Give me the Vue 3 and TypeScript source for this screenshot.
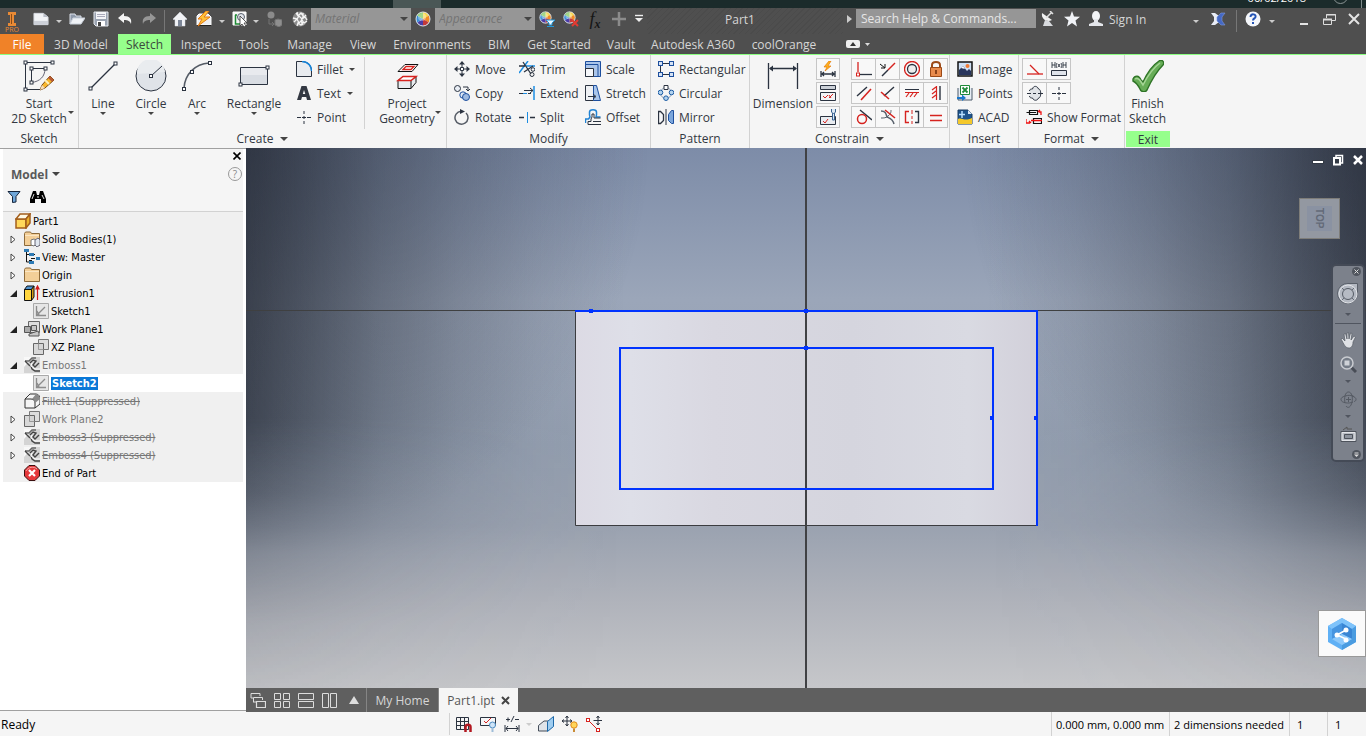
<script setup lang="ts">
import { ref } from 'vue'

interface Tool { icon: string; label: string; caret?: boolean }
interface TreeNode { icon: string; label: string; level: number; state?: 'open' | 'closed'; muted?: boolean; struck?: boolean; active?: boolean }

const K = '#2b3340'
const R = '#d6231f'
const B = '#1d4f9e'
const sq = (x: number, y: number, c = K) => `<rect x="${x - 1.5}" y="${y - 1.5}" width="3" height="3" fill="#fff" stroke="${c}"/>`

const globe = '<circle cx="8" cy="8" r="7" fill="#eee"/><path d="M8 8V1A7 7 0 0 1 14 4.500Z" fill="#f7d64a"/><path d="M8 8L14 4.500A7 7 0 0 1 14 11.500Z" fill="#f08a24"/><path d="M8 8L14 11.500A7 7 0 0 1 8 15Z" fill="#c33a3a"/><path d="M8 8V15A7 7 0 0 1 2 11.500Z" fill="#4a3ca8"/><path d="M8 8L2 11.500A7 7 0 0 1 2 4.500Z" fill="#3b8fd8"/><path d="M8 8L2 4.500A7 7 0 0 1 8 1Z" fill="#6fc04a"/><circle cx="7" cy="6" r="4" fill="#fff" opacity=".35"/><circle cx="8" cy="8" r="7" fill="none" stroke="#d8dde8"/>'
const globeSmall = `<svg x="0" y="0" width="13" height="13" viewBox="0 0 16 16">${globe}</svg>`
const sketchPage = '<path d="M.5.5h15v15H.5z" fill="#e6e6e6" stroke="#a9a9a9"/><path d="M3.500 3v9.500H13M4 12l8-8M4 8l2 4" fill="none" stroke="#8c8c8c" stroke-width="1.300"/>'
const planes = '<path d="M5.500.5h10v10h-10z" fill="#ddd" stroke="#777"/><path d="M.5 4.500h10v11H.5z" fill="#d2d2d2" fill-opacity=".8" stroke="#666"/><path d="M5.500 4.500v6h5" fill="none" stroke="#999"/>'
const emboss = '<path d="M0 0h16v16H0z" fill="#d4d4d4"/><path d="M0 0h9L0 10z" fill="#f8f8f8"/><path d="M1 4h4l3-3h4" fill="none" stroke="#666" stroke-width="1.500"/><path d="M6 6l3-3 3 1-3 4 2 2 4-4M7 9l1 3 3 2h5M1 4l5 5" fill="none" stroke="#444" stroke-width="1.400"/><path d="M8 6l-1 3 4 3h5" stroke="#fff" fill="none"/>'
const folder = '<path d="M.5 2.500l1-1.500h5l1 1.500h8v12H.5z" fill="#f3cf98" stroke="#8d6a3a"/><path d="M1 4.500h14" stroke="#fbe6c4"/>'

const icons: Record<string, string> = {
  newFile: '<path d="M1 2h10l5 4v8H1z" fill="#f1f3f6" stroke="#d4d8de"/><path d="M11 2v4h5" fill="#b9bec8"/><path d="M1 10h15v4H1z" fill="#ccd0d8"/>',
  open: '<path d="M1 13V3h5l1 2h5v3" fill="#8e99aa" stroke="#dde2ea"/><path d="M1 13L4 7h12l-4 6z" fill="#eef1f5" stroke="#c9d0da"/>',
  save: '<path d="M1 1h14v14H3l-2-2z" fill="#9aa3b1" stroke="#e5e8ed"/><path d="M3 1h10v7H3z" fill="#f4f5f8"/><path d="M4 3.500h8M4 5.500h8" stroke="#aab"/><path d="M4 10h8v5H4z" fill="#fff"/><path d="M5 11h3v4H5z" fill="#444"/>',
  undo: '<path d="M1 7l6-5v3c6 0 8 3 7 8-1-3-3-4-7-4v3z" fill="#f5f5f5"/>',
  redo: '<path d="M15 7L9 2v3C3 5 1 8 2 13c1-3 3-4 7-4v3z" fill="#969696"/>',
  home: '<path d="M1 8l7-7 7 7-1 1-1-1v7H3V8L2 9z" fill="#f2f3f6" stroke="#d8dce4" stroke-width=".5"/><path d="M6 9h4v6H6z" fill="#7d8798"/>',
  bolt: '<path d="M1 5l2-2h9l3 3v8H1z" fill="#eceef2" stroke="#fff"/><path d="M1 14h14v1H1z" fill="#222"/><path d="M10 0L2 8h4l-4 7L14 6H8l5-6z" fill="#ffc23a" stroke="#e47a12"/>',
  pick: '<path d="M1 1h13v13H1z" fill="#f4f4f4" stroke="#fff"/><path d="M3.500 4v9H9M3 4h2" stroke="#1f8a35" stroke-width="1.500" fill="none"/><circle cx="9" cy="6" r="3.500" fill="#dfe3ea" stroke="#59616e"/><path d="M8 5v10l2-2 2 3 2-1-2-3h3z" fill="#fff" stroke="#333" stroke-width=".8"/>',
  physical: '<circle cx="5" cy="4" r="3.500" fill="#8b8b8b"/><path d="M3 8v5h5M6 11l2 2-2 2" stroke="#747474" fill="none"/><path d="M9 9l3-1 4 1v5l-3 2-4-2z" fill="#8f8f8f" stroke="#757575"/>',
  sphere: '<circle cx="8" cy="8" r="7.500" fill="#8c8c8c"/><path d="M4 2l2 3 3-3 3 4 2-2M1 7l4 1 2-3 3 3 3-2 2 3M2 11l3-3 2 4 3-3 2 3 3-2M5 15l1-3 3 2 2-3M5 1l1 4M11 2v4l-2 4 2 4" fill="none" stroke="#f4f4f4" stroke-width="1.300"/>',
  globe,
  globeFilter: `${globeSmall}<path d="M7 9h9l-3 3v2h-3v-2z" fill="#e9f7ff" stroke="#2497d8"/><path d="M8 15.500h7" stroke="#2497d8"/>`,
  globeDelete: `${globeSmall}<path d="M9 9l6 6M15 9l-6 6" stroke="#e33b32" stroke-width="2"/>`,
  plus: '<path d="M8 1v14M1 8h14" stroke="#8b8b8b" stroke-width="2.500"/>',
  more: '<path d="M4 4.500h8" stroke="#eee" stroke-width="1.400"/><path d="M4 7h8l-4 4z" fill="#eee"/>',
  dish: '<path d="M2 2c-1 6 5 10 10 7z" fill="#f2f2f2"/><path d="M6 7l6-6M10 0l3 3" stroke="#e2e2e2" stroke-width="1.500"/><path d="M5 9l-2 6h10l-4-5z" fill="#d8dade"/>',
  star: '<path d="M8 0l2 5.500 6 .3-4.500 3.800L13 15.500 8 12l-5 3.500 1.500-5.900L0 5.800l6-.3z" fill="#f1f3f7"/>',
  person: '<ellipse cx="8" cy="5" rx="4" ry="5" fill="#f3f4f7"/><path d="M6 8h4v3l5 2v2H1v-2l5-2z" fill="#e4e6eb"/>',
  exchange: '<path d="M1 2h4l4 3v6l-4 3H1l3-4V6z" fill="#e9edf7"/><path d="M15 2h-4L7 6v4l4 4h4l-3-4V6z" fill="#4468c4" stroke="#7e97dc" stroke-width=".6"/>',
  help: '<circle cx="8" cy="8" r="7.500" fill="#f5f7fb"/><path d="M5.500 6c0-4 6-3 5 0-.5 1.500-2.500 1.500-2.500 3.500" fill="none" stroke="#2454b5" stroke-width="2"/><path d="M7 11h2v2H7z" fill="#2454b5"/>',
  min: '<path d="M4 13h8" stroke="#e4e4e4" stroke-width="2"/>',
  restore: '<path d="M5.500 7V3.500h9v6H11" fill="none" stroke="#ddd"/><path d="M5 4h10" stroke="#ddd"/><path d="M2.500 8.500h8v5h-8z" fill="none" stroke="#ddd"/><path d="M2 8.500h9" stroke="#ddd" stroke-width="2"/>',
  close: '<path d="M3 3l10 10M13 3L3 13" stroke="#e4e4e4" stroke-width="2"/>',

  startSketch: `<path d="M2.500 29.500v-27h27M2.500 29.500H17M8.500 22V8.500H22" fill="none" stroke="${K}"/><path d="M22 8.500c0 8-5 13-13.500 14" fill="none" stroke="#667"/>${sq(2.5, 2.5)}${sq(29.5, 2.5)}${sq(2.5, 29.5)}${sq(8.5, 8.5)}${sq(22.5, 8.5)}${sq(8.5, 22.5)}<path d="M27 16l4 4-9 8-5 2 2-5z" fill="#f8b62c" stroke="#7a4b13"/><path d="M27 16l4 4-2 2-4-4z" fill="#b75a35"/><path d="M22 20l4 4" stroke="#fff1b8" stroke-width="2"/><path d="M17 30l2-5 3 3z" fill="#f5ddba"/>`,
  line: `<path d="M4 28L28 4" stroke="${K}" stroke-width="1.300"/>${sq(3.5, 28.5)}${sq(28.5, 3.5)}`,
  circle: `<circle cx="16" cy="16" r="15" fill="#dfe3e8" stroke="${K}"/><path d="M2 14a14 14 0 0 1 28-2z" fill="#e9ecef"/><path d="M16 16L27 6" stroke="${K}"/>${sq(16, 16)}`,
  arc: `<path d="M3 28C4 14 14 4 28 3" fill="none" stroke="#555c66" stroke-width="1.500"/>${sq(3, 29)}${sq(11, 12)}${sq(29, 3)}`,
  rectangle: `<path d="M2.500 7.500h27v17h-27z" fill="#d9dde3" stroke="${K}"/><path d="M3 8h26v7H3z" fill="#e8eaee"/>${sq(2.5, 24.5)}${sq(29.5, 7.5)}`,
  fillet: `<path d="M.5 15.500V.5H6C12 .5 15.500 5 15.500 10v5.500z" fill="#e8ebef" stroke="${K}"/><path d="M6 .5c6 0 9.500 4.500 9.500 9.500" fill="none" stroke="#1583d8" stroke-width="1.500"/>`,
  text: '<path d="M5.500 1h5L15 15h-4l-.8-3H6l-.9 3H1zM8 5l-1.200 4h2.500z" fill="#333842" fill-rule="evenodd"/>',
  point: `<path d="M8 2v3M8 7v3M8 12v3M1 8.500h4M6 8.500h4M11 8.500h4" stroke="${K}"/>`,
  project: `<path d="M7 11.500l7-7h13l-6 7z" fill="#fff" stroke="#111"/><path d="M12 9.500l3-3h8l-3 3z" fill="none" stroke="${R}" stroke-width="1.300"/><path d="M7 20.500l5-4h13v6l-5 6H7z" fill="#e8ebef" stroke="#111"/><path d="M7 20.500h13l5-4M20 20.500v8" fill="none" stroke="#111"/><path d="M7 20.500l5-4h13l-5 4z" fill="#fff" stroke="${R}" stroke-width="1.500"/>`,
  move: `<path d="M8 0l3 3.500H5zM8 16l3-3.500H5zM0 8l3.500-3v6zM16 8l-3.500-3v6z" fill="${K}"/><path d="M8 3v3M8 10v3M3 8h3M10 8h3" stroke="${K}"/><path d="M6.500 6.500h3v3h-3z" fill="#fff" stroke="${K}"/>`,
  copy: `<circle cx="3.500" cy="3.500" r="3" fill="#e9eef5" stroke="${K}"/><path d="M9 2h5v4M12 4l2 2 2-2" fill="none" stroke="${K}"/><circle cx="9" cy="10" r="3.200" fill="#dbe6f5" stroke="${B}"/><circle cx="12" cy="12" r="3.500" fill="#9db9e0" stroke="${B}"/>`,
  rotate: `<path d="M7 2.200A6.500 6.500 0 1 0 12 4" fill="none" stroke="#565c66" stroke-width="1.500"/><path d="M6 0l5 2.500L6 5z" fill="${K}"/>`,
  trim: `<path d="M7 5h9M0 12L9 0" stroke="#1b8de2" stroke-width="1.500"/><path d="M0 5h6M4 1l8 12M14 5L5 11" stroke="${K}" stroke-width="1.300"/><circle cx="13" cy="13.500" r="2" fill="none" stroke="${K}"/><circle cx="14" cy="8.500" r="1.800" fill="none" stroke="${K}"/>`,
  extend: `<path d="M0 8.500h8" stroke="#1b8de2"/><path d="M5 5.500h9M11 3l3 2.500L11 8M0 8.500h4M9 8.500h3" stroke="${K}" fill="none"/><path d="M15 1v14" stroke="#1b8de2" stroke-width="1.500"/>`,
  split: `<path d="M0 8.500h5M11 8.500h5" stroke="${K}" stroke-width="1.300"/><path d="M8.500 3v11" stroke="#1b8de2"/>`,
  scale: `<path d="M.5.5h15v15H.5z" fill="#aac5ea" stroke="${B}"/><path d="M1 3.500h12v12" fill="none" stroke="${B}"/><path d="M.5 7.500h8v8h-8z" fill="#f5f7fa" stroke="${K}"/>`,
  stretch: `<path d="M.5.5h8v15h-8z" fill="#eef0f3" stroke="${K}"/><path d="M8.500.5h3l4 15h-7z" fill="#a9c6ec" stroke="${B}"/><path d="M3 11.500h7M8 9l3 2.500L8 14" fill="none" stroke="${K}"/>`,
  offset: `<path d="M.5 14v-4h3L5 8 4.500 6V3c0-3 7-3 7 0v3L11 8l1.500 0h3" fill="none" stroke="#2183d4" stroke-width="1.500"/><path d="M3 15.500v-3h3V10L7 8V5h2v4h6.500M3 15.500h13M8 12.500h8" fill="none" stroke="${K}"/>`,
  rectangular: `<path d="M4 2.500h8M2.500 4v8M4 13.500h8" stroke="${K}"/>${[[2.5, 2.5], [13.5, 2.5], [2.5, 13.5], [13.5, 13.5]].map(p => `<rect x="${p[0] - 2}" y="${p[1] - 2}" width="4" height="4" fill="#d6e3f5" stroke="${B}"/>`).join('')}`,
  circular: `<circle cx="8" cy="8" r="5.500" fill="none" stroke="#8fa1b8"/>${[[13.5, 7.5], [2.5, 7.5], [8, 13.2]].map(p => `<circle cx="${p[0]}" cy="${p[1]}" r="2.300" fill="#b4d4ef" stroke="#1d5da5"/>`).join('')}<path d="M6 .5h4v4H6z" fill="#fff" stroke="${K}"/>`,
  mirror: `<path d="M8 0v16" stroke="${K}"/><path d="M.5 2.500h2l3 3v6l-3 3h-2z" fill="#f5f6f8" stroke="${K}" stroke-width="1.300"/><path d="M15.500 1.500h-2l-3 4v6l3 3h2z" fill="#7ba6dc" stroke="${B}"/>`,
  dimension: `<path d="M1.500 3v26M30.500 3v26M3 8.500h26" stroke="${K}" stroke-width="1.300"/><path d="M2 8.500l4-3v6zM30 8.500l-4-3v6z" fill="${K}"/>`,
  autoDim: `<path d="M9 0L4 6h3l-2 4 6-5H8l3-5z" fill="#ffb21e" stroke="#e57d0a" stroke-width=".7"/><path d="M1 10v6M15 10v6M2 13h12M4 11l-2 2 2 2M12 11l2 2-2 2" stroke="${K}" fill="none" stroke-width="1.300"/>`,
  showConstr: `<path d="M.5.5h15v4H.5z" fill="#ccd1d8" stroke="${K}"/><path d="M.5 7.500h15v8H.5z" fill="#f2f4f6" stroke="${K}"/><path d="M3 11l2 2 3-3M9 13l4-4M9 10l2 3" stroke="${R}" fill="none"/>`,
  constrSet: `<path d="M.5 7.500h15v8H.5z" fill="#e9ecf0" stroke="${K}"/><path d="M3 12l2 2 3-4" stroke="${R}" fill="none"/><path d="M12.500 4v7h2V4" stroke="#35608f" fill="#dbe7f4"/><path d="M11.500 0v3l2 2 2-2V0" fill="#dbe7f4" stroke="#35608f"/>`,
  coincident: `<path d="M2 1v10" stroke="${R}" stroke-width="1.300"/><path d="M4 13.500h12" stroke="${K}" stroke-width="1.300"/><rect x=".5" y="12" width="3" height="3" fill="#fff" stroke="${R}"/>`,
  collinear: `<path d="M0 3l5 4M5 3v4H1" stroke="#111" fill="none"/><path d="M2 15l6-6" stroke="${K}" stroke-width="1.400"/><path d="M8 9l7-7" stroke="${R}" stroke-width="1.400"/>`,
  concentric: `<circle cx="8" cy="8" r="7.500" fill="none" stroke="${R}" stroke-width="1.300"/><circle cx="8" cy="8" r="4.500" fill="#eee" stroke="${K}" stroke-width="1.300"/>`,
  lock: '<path d="M4 7V4c0-4 8-4 8 0v3" fill="none" stroke="#9b4a18" stroke-width="2"/><path d="M2.500 6.500h11v9h-11z" fill="#e88b4d" stroke="#9b4a18"/><path d="M8 9v4" stroke="#6b2a08" stroke-width="1.500"/>',
  parallel: `<path d="M1 11l10-9" stroke="${K}" stroke-width="1.400"/><path d="M5 15L15 4" stroke="${R}" stroke-width="1.600"/>`,
  perpendicular: `<path d="M4 11l10-9" stroke="${K}" stroke-width="1.400"/><path d="M1 7l8 7" stroke="${R}" stroke-width="1.600"/>`,
  horizontal: `<path d="M1 4.500h14" stroke="${K}"/><path d="M1 7.500h14M5 8l-3 4M9 8l-3 4M13 8l-3 4" stroke="${R}" stroke-width="1.200"/>`,
  vertical: `<path d="M12 1v14" stroke="${K}" stroke-width="1.400"/><path d="M8.500 1v14M8 2L4 5M8 6L4 9M8 10l-4 3" stroke="${R}" stroke-width="1.200"/>`,
  tangent: `<path d="M4 1l12 10" stroke="${K}" stroke-width="1.400"/><circle cx="6" cy="10" r="4.500" fill="none" stroke="${R}" stroke-width="1.500"/>`,
  smooth: `<path d="M1 2c5 0 5 3 6 6 2 1 6 2 7 7" fill="none" stroke="#59616c" stroke-width="1.500"/><path d="M1 9c3 0 5 0 7-2 3-2 3-4 3-6" fill="none" stroke="#59616c"/><path d="M5 1l10 8" stroke="${R}" stroke-width="1.600"/>`,
  symmetric: `<path d="M5 2.500H1.500v11H5" fill="none" stroke="${R}" stroke-width="1.400"/><path d="M11 2.500h3.500v11H11" fill="none" stroke="${K}" stroke-width="1.400"/><path d="M8 1v4M8 7v3M8 12v3" stroke="${R}"/>`,
  equal: `<path d="M2 6.500h12M2 11.500h12" stroke="${R}" stroke-width="1.300"/>`,
  image: '<path d="M1 1h14v14H1z" fill="#cfe0f5" stroke="#111" stroke-width="1.500"/><circle cx="10.500" cy="5" r="2" fill="#f07b35"/><path d="M2 14V9l4-4 4 5 2-2 2 2v4z" fill="#28355c"/><path d="M4 7l2-2 2 3z" fill="#fff"/>',
  points: '<path d="M1 3v12h14V3" fill="#e7edf5" stroke="#4d5a6a"/><path d="M3.500.5h9v9h-9z" fill="#fff" stroke="#1f8a3a"/><path d="M5.500 2.500l5 5M10.500 2.500l-5 5" stroke="#1f8a3a" stroke-width="1.800"/><path d="M0 12h5V9.500l4 3.500-4 3v-2H0z" fill="#1b78cc"/>',
  acad: '<path d="M1 1h10l4 4v10H1z" fill="#1e548c" stroke="#163b63"/><path d="M1 10c4-2 6 3 14-1v6H1z" fill="#f4c82b"/><path d="M11 1v4h4z" fill="#dceaf8"/><path d="M5 2v7M2 5.500h6" stroke="#b9e0ff" stroke-width="1.500"/>',
  construction: `<path d="M0 13h16" stroke="${R}" stroke-width="1.300"/><path d="M3 4l9 9" stroke="${R}" stroke-width="1.300"/>`,
  driven: `<path d="M1 1v6M4 1v6M1 4h3M12 1v6M15 1v6M12 4h3M6 2c-1 2-1 3 0 5M10 2c1 2 1 3 0 5M7 3l2 3M9 3L7 6" stroke="${K}" fill="none" stroke-width=".9"/><path d="M.5 9.500h15v5H.5z" fill="#dfe3ea" stroke="${K}"/>`,
  centerline: `<path d="M2.500 6c0-2 2-2 3-2 1-4 5-3 6 0 3 0 3 9 0 9-1 3-5 3-6 0-1 0-3 0-3-2" fill="#e1e4e8" stroke="${K}"/><path d="M0 8.500h4M6 8.500h3M11 8.500h5" stroke="${K}"/>`,
  showFormat: `<path d="M3.500 1.500h8v4h-8zM.5 3.500H10M7.500 9.500h8v5h-8z" fill="none" stroke="#111" stroke-width="1.200"/><path d="M13 3h2v3M14 1l-2 2M0 10v4h4M3 12l2 2M5 11.500h11" stroke="#e11" fill="none" stroke-width="1.300"/>`,
  check: '<path d="M1 19c2-4 6-4 8 1l2 2C15 13 21 5 27 1c3-2 6 1 4 4-6 6-11 14-16 25-2 3-6 2-7-1C6 25 3 22 1 21z" fill="#67ad57" stroke="#2f7427" stroke-width="1.400"/><path d="M3 19c3-2 5 1 8 6C16 15 21 8 28 3" fill="none" stroke="#a6d596" stroke-width="1.500"/>',

  part: '<path d="M1 6h10v9H1z" fill="#ffd85c" stroke="#a35e1c" stroke-width="1.500"/><path d="M1 6l4-5h10l-4 5z" fill="#fff8e2" stroke="#a35e1c" stroke-width="1.500"/><path d="M11 6l4-5v9l-4 5z" fill="#e9b02a" stroke="#a35e1c" stroke-width="1.500"/>',
  bodies: `${folder}<path d="M7 9l3-1 2 1v4l-2 2-3-1z" fill="#fff" stroke="#777"/><path d="M11 9l3-2 2 2v5l-3 2-2-2z" fill="#dfe6ef" stroke="#667"/>`,
  view: '<path d="M2.500 2v11h3M2.500 5.500h3M10 5.500h1M8 11.500H5" fill="none" stroke="#111"/><path d="M0 0h5v3H0zM5 4h5v3H5zM5 12h5v3H5zM12 8h4v3h-4z" fill="#2e7bb5"/><path d="M7 9.500h4" stroke="#111"/>',
  folder,
  extrusion: '<path d="M.5 4.500h7v11h-7z" fill="#ffd53f" stroke="#111"/><path d="M.5 4.500L3 1h7l-2.500 3.500z" fill="#4f92cf" stroke="#111"/><path d="M7.500 4.500L10 1v11l-2.500 3.500z" fill="#d49c18" stroke="#111"/><path d="M13.500 15V2M12 4l1.500-3L15 4z" stroke="#d31919" stroke-width="1.200" fill="#d31919"/>',
  sketchPage,
  workPlane: '<path d="M4.500.5h11v11h-11z" fill="#ddd" stroke="#666"/><path d="M.5 5.500h6v6h-6z" fill="#aaa" stroke="#555"/><path d="M5 13l9-3 1 2v3H5zM7.500 4.500h5v5h-5z" fill="#c6c6c6" stroke="#555"/>',
  planes,
  emboss,
  filletNode: '<path d="M1 6l5-5h6c3 0 4 3 4 5v5l-5 4H1z" fill="#f5f5f5" stroke="#333"/><path d="M1 6h6c3 0 4 2 4 4v5" fill="none" stroke="#333"/><path d="M8 6l4-5c3 0 4 3 4 5l-5 4c0-2-1-4-3-4z" fill="#8a8a8a"/>',
  end: '<path d="M5 .5h6L15.500 5v6L11 15.500H5L.5 11V5z" fill="#e5383b" stroke="#3b1010"/><path d="M2 6c2-4 8-5 11-2" stroke="#f6a5a5" fill="none"/><path d="M5 5l6 6M11 5l-6 6" stroke="#fff" stroke-width="2.200"/>',

  cascade: '<path d="M1 6V1.500h9V4M1 6h2M3.500 10V5.500h9V8M3 10h3" fill="none" stroke="#ddd"/><path d="M6.500 9.500h9v6h-9zM6 9.500h10" fill="none" stroke="#ddd" stroke-width="1.200"/>',
  tiles: '<path d="M.5 1.500h6v6h-6zM9.500 1.500h6v6h-6zM.5 9.500h6v6h-6zM9.500 9.500h6v6h-6z" fill="none" stroke="#ddd"/>',
  rows: '<path d="M.5 1.500h15v6H.5zM.5 9.500h15v6H.5z" fill="none" stroke="#ddd"/>',
  cols: '<path d="M.5 1.500h6v14h-6zM8.500 1.500h6v14h-6z" fill="none" stroke="#ddd"/>',
  up: '<path d="M8 4l5 8H3z" fill="#ddd"/>',
  snap: `<path d="M.5 1.500h12v12H.5zM.5 5.500h12M.5 9.500h12M4.500 1v12M8.500 1v12" fill="none" stroke="${K}"/><path d="M9.500 16v-5c0-3 5-3 5 0v5" fill="none" stroke="#b21820" stroke-width="2.500"/>`,
  hint: `<path d="M.5 1.500h15v8H.5z" fill="#f5f6f8" stroke="${K}"/><path d="M4 5l2 2 5-5" stroke="${R}" fill="none"/><circle cx="12.500" cy="9" r="3" fill="#cfe4f7" stroke="#4d8cc2"/><path d="M11.500 12h2v4h-2z" fill="#9ebdd8"/>`,
  dimEdit: `<path d="M1 9v7M15 9v7M2 12.500h12M4 10l-2 2.500L4 15M12 10l2 2.500-2 2.500M2 3.500h4M4 1.500v4M7 6l3-6M11 3.500h4" stroke="${K}" fill="none"/>`,
  slice: '<path d="M.5 9.500L6 5h8v6l-5 4H.5z" fill="#dfe3e8" stroke="#444d59"/><path d="M9.500 5.500l6-5v10l-6 5z" fill="#9fcdf0" stroke="#1d68a8"/>',
  moveLight: `<path d="M5 0v10M0 5h10M3.500 2L5 0l1.500 2M3.500 8L5 10l1.500-2M2 3.500L0 5l2 1.500M8 3.500L10 5 8 6.500" stroke="${K}" fill="none"/><circle cx="12" cy="9" r="3.200" fill="#ffd55a" stroke="#e08a1a"/><path d="M11 12.500h2V16h-2z" fill="#c98c37"/>`,
  relax: `<path d="M2 4l10 10" stroke="${R}"/>${sq(2, 4, R)}${sq(12, 14, R)}<path d="M12 0v9M7.500 4.500h9M10.500 2L12 0l1.500 2M10.500 7L12 9l1.500-2" stroke="${K}" fill="none"/>`,
}

const ribbonTabs = ['File', '3D Model', 'Sketch', 'Inspect', 'Tools', 'Manage', 'View', 'Environments', 'BIM', 'Get Started', 'Vault', 'Autodesk A360', 'coolOrange']
const createBig: Tool[] = [
  { icon: 'line', label: 'Line' },
  { icon: 'circle', label: 'Circle' },
  { icon: 'arc', label: 'Arc' },
  { icon: 'rectangle', label: 'Rectangle' },
]
const createSmall: Tool[] = [
  { icon: 'fillet', label: 'Fillet', caret: true },
  { icon: 'text', label: 'Text', caret: true },
  { icon: 'point', label: 'Point' },
]
const modify: Tool[] = [
  { icon: 'move', label: 'Move' }, { icon: 'trim', label: 'Trim' }, { icon: 'scale', label: 'Scale' },
  { icon: 'copy', label: 'Copy' }, { icon: 'extend', label: 'Extend' }, { icon: 'stretch', label: 'Stretch' },
  { icon: 'rotate', label: 'Rotate' }, { icon: 'split', label: 'Split' }, { icon: 'offset', label: 'Offset' },
]
const pattern: Tool[] = [
  { icon: 'rectangular', label: 'Rectangular' },
  { icon: 'circular', label: 'Circular' },
  { icon: 'mirror', label: 'Mirror' },
]
const insert: Tool[] = [
  { icon: 'image', label: 'Image' },
  { icon: 'points', label: 'Points' },
  { icon: 'acad', label: 'ACAD' },
]
const constrainSide = ['autoDim', 'showConstr', 'constrSet']
const constraints = ['coincident', 'collinear', 'concentric', 'lock', 'parallel', 'perpendicular', 'horizontal', 'vertical', 'tangent', 'smooth', 'symmetric', 'equal']
const formats = ['construction', 'driven', 'centerline', 'point']

const tree: TreeNode[] = [
  { icon: 'part', label: 'Part1', level: 0 },
  { icon: 'bodies', label: 'Solid Bodies(1)', level: 1, state: 'closed' },
  { icon: 'view', label: 'View: Master', level: 1, state: 'closed' },
  { icon: 'folder', label: 'Origin', level: 1, state: 'closed' },
  { icon: 'extrusion', label: 'Extrusion1', level: 1, state: 'open' },
  { icon: 'sketchPage', label: 'Sketch1', level: 2 },
  { icon: 'workPlane', label: 'Work Plane1', level: 1, state: 'open' },
  { icon: 'planes', label: 'XZ Plane', level: 2 },
  { icon: 'emboss', label: 'Emboss1', level: 1, state: 'open', muted: true },
  { icon: 'sketchPage', label: 'Sketch2', level: 2, active: true },
  { icon: 'filletNode', label: 'Fillet1 (Suppressed)', level: 1, struck: true },
  { icon: 'planes', label: 'Work Plane2', level: 1, state: 'closed', muted: true },
  { icon: 'emboss', label: 'Emboss3 (Suppressed)', level: 1, state: 'closed', struck: true },
  { icon: 'emboss', label: 'Emboss4 (Suppressed)', level: 1, state: 'closed', struck: true },
  { icon: 'end', label: 'End of Part', level: 1 },
]
const layouts = ['cascade', 'tiles', 'rows', 'cols', 'up']
const activeTab = ref('Sketch')
const search = ref('')
</script>

<template>
  <div class="app">
    <div class="desktop">
      <span class="lit"></span>
      <span class="date">06/02/2018</span>
      <span class="ring"></span>
      <span class="edge"></span>
    </div>

    <header class="titlebar">
      <button class="logo" aria-label="Application menu">
        <svg width="12" height="14" viewBox="0 0 12 14"><path d="M2 0h8v3H8v8h2v3H2v-3h2V3H2z" fill="#e98a35" /><path d="M5 2h1v10H5z" fill="#8d4b14" /></svg>
        <span>PRO</span>
      </button>
      <button aria-label="New"><svg width="16" height="16" viewBox="0 0 17 16" v-html="icons.newFile" /></button>
      <i class="caret light"></i>
      <button aria-label="Open"><svg width="16" height="16" viewBox="0 0 16 16" v-html="icons.open" /></button>
      <button aria-label="Save"><svg width="16" height="16" viewBox="0 0 16 16" v-html="icons.save" /></button>
      <button aria-label="Undo"><svg width="16" height="16" viewBox="0 0 16 16" v-html="icons.undo" /></button>
      <button aria-label="Redo"><svg width="16" height="16" viewBox="0 0 16 16" v-html="icons.redo" /></button>
      <i class="bar"></i>
      <button aria-label="Home"><svg width="16" height="16" viewBox="0 0 16 16" v-html="icons.home" /></button>
      <button aria-label="Update"><svg width="16" height="16" viewBox="0 0 16 16" v-html="icons.bolt" /></button>
      <i class="caret light"></i>
      <button aria-label="Select"><svg width="16" height="16" viewBox="0 0 16 16" v-html="icons.pick" /></button>
      <i class="caret light"></i>
      <button aria-label="Physical"><svg width="16" height="16" viewBox="0 0 16 16" v-html="icons.physical" /></button>
      <button aria-label="Materials"><svg width="16" height="16" viewBox="0 0 16 16" v-html="icons.sphere" /></button>
      <label class="combo"><select aria-label="Material"><option>Material</option></select><i class="caret wide"></i></label>
      <button aria-label="Appearances"><svg width="16" height="16" viewBox="0 0 16 16" v-html="icons.globe" /></button>
      <label class="combo"><select aria-label="Appearance"><option>Appearance</option></select><i class="caret wide"></i></label>
      <button aria-label="Adjust"><svg width="16" height="16" viewBox="0 0 16 16" v-html="icons.globeFilter" /></button>
      <button aria-label="Clear"><svg width="16" height="16" viewBox="0 0 16 16" v-html="icons.globeDelete" /></button>
      <button class="fx" aria-label="Parameters">f<sub>x</sub></button>
      <button aria-label="Add"><svg width="16" height="16" viewBox="0 0 16 16" v-html="icons.plus" /></button>
      <button aria-label="Customize"><svg width="16" height="16" viewBox="0 0 16 16" v-html="icons.more" /></button>
      <span class="doc">Part1</span>
      <i class="play"></i>
      <input v-model="search" class="search" type="text" placeholder="Search Help &amp; Commands..." aria-label="Search Help">
      <button aria-label="Communication"><svg width="16" height="16" viewBox="0 0 16 16" v-html="icons.dish" /></button>
      <button aria-label="Favorites"><svg width="16" height="16" viewBox="0 0 16 16" v-html="icons.star" /></button>
      <button aria-label="Account"><svg width="16" height="16" viewBox="0 0 16 16" v-html="icons.person" /></button>
      <button class="signin">Sign In</button>
      <i class="caret light"></i>
      <button aria-label="Exchange"><svg width="16" height="16" viewBox="0 0 16 16" v-html="icons.exchange" /></button>
      <i class="bar"></i>
      <button aria-label="Help"><svg width="16" height="16" viewBox="0 0 16 16" v-html="icons.help" /></button>
      <i class="caret light"></i>
      <span></span>
      <button aria-label="Minimize"><svg width="16" height="16" viewBox="0 0 16 16" v-html="icons.min" /></button>
      <button aria-label="Restore"><svg width="16" height="16" viewBox="0 0 16 16" v-html="icons.restore" /></button>
      <button aria-label="Close"><svg width="16" height="16" viewBox="0 0 16 16" v-html="icons.close" /></button>
    </header>

    <nav class="tabs">
      <button v-for="t in ribbonTabs" :key="t" :class="{ file: t === 'File', on: t === activeTab }" @click="activeTab = t">{{ t }}</button>
      <button class="pill" aria-label="Minimize ribbon">
        <svg width="24" height="8" viewBox="0 0 24 8"><rect width="14" height="8" rx="2" fill="#eee" /><path d="M7 2l3 4H4z" fill="#333" /><path d="M19 3h5l-2.500 3z" fill="#ddd" /></svg>
      </button>
    </nav>

    <section class="ribbon">
      <div class="group g-sketch">
        <div class="body">
          <button class="big"><svg width="32" height="32" viewBox="0 0 32 32" v-html="icons.startSketch" /><span>Start<br>2D Sketch</span></button>
          <i class="caret side"></i>
        </div>
        <div class="name">Sketch</div>
      </div>

      <div class="group g-create">
        <div class="body">
          <button v-for="t in createBig" :key="t.label" class="big"><svg width="32" height="32" viewBox="0 0 32 32" v-html="icons[t.icon]" /><span>{{ t.label }}</span><i class="caret"></i></button>
          <div class="stack">
            <button v-for="t in createSmall" :key="t.label" class="small"><svg width="16" height="16" viewBox="0 0 16 16" v-html="icons[t.icon]" />{{ t.label }}<i v-if="t.caret" class="caret"></i></button>
          </div>
          <button class="big project"><svg width="32" height="32" viewBox="0 0 32 32" v-html="icons.project" /><span>Project<br>Geometry</span></button>
          <i class="caret side"></i>
        </div>
        <div class="name">Create<i class="caret wide"></i></div>
      </div>

      <div class="group g-modify">
        <div class="body grid3">
          <button v-for="t in modify" :key="t.label" class="small"><svg width="16" height="16" viewBox="0 0 16 16" v-html="icons[t.icon]" />{{ t.label }}</button>
        </div>
        <div class="name">Modify</div>
      </div>

      <div class="group g-pattern">
        <div class="body stack">
          <button v-for="t in pattern" :key="t.label" class="small"><svg width="16" height="16" viewBox="0 0 16 16" v-html="icons[t.icon]" />{{ t.label }}</button>
        </div>
        <div class="name">Pattern</div>
      </div>

      <div class="group g-constrain">
        <div class="body">
          <button class="big"><svg width="32" height="32" viewBox="0 0 32 32" v-html="icons.dimension" /><span>Dimension</span></button>
          <div class="cells one"><button v-for="c in constrainSide" :key="c" :aria-label="c"><svg width="16" height="16" viewBox="0 0 16 16" v-html="icons[c]" /></button></div>
          <div class="cells four"><button v-for="c in constraints" :key="c" :aria-label="c"><svg width="16" height="16" viewBox="0 0 16 16" v-html="icons[c]" /></button></div>
        </div>
        <div class="name">Constrain<i class="caret wide"></i></div>
      </div>

      <div class="group g-insert">
        <div class="body stack">
          <button v-for="t in insert" :key="t.label" class="small"><svg width="16" height="16" viewBox="0 0 16 16" v-html="icons[t.icon]" />{{ t.label }}</button>
        </div>
        <div class="name">Insert</div>
      </div>

      <div class="group g-format">
        <div class="body stack">
          <div class="cells two"><button v-for="c in formats" :key="c" :aria-label="c"><svg width="16" height="16" viewBox="0 0 16 16" v-html="icons[c]" /></button></div>
          <button class="small"><svg width="16" height="16" viewBox="0 0 16 16" v-html="icons.showFormat" />Show Format</button>
        </div>
        <div class="name">Format<i class="caret wide"></i></div>
      </div>

      <div class="group g-exit">
        <div class="body">
          <button class="big"><svg width="32" height="32" viewBox="0 0 32 32" v-html="icons.check" /><span>Finish<br>Sketch</span></button>
        </div>
        <div class="name exit">Exit</div>
      </div>
    </section>

    <main class="work">
      <aside class="browser">
        <div class="head">
          <button class="x" aria-label="Close browser"><svg width="8" height="8" viewBox="0 0 8 8"><path d="M.5.5l7 7M7.500.5l-7 7" stroke="#000" stroke-width="1.600" /></svg></button>
          <div class="modelrow">
            <button class="model">Model<i class="caret wide"></i></button>
            <button class="q" aria-label="Help">?</button>
          </div>
          <div class="find">
            <button aria-label="Filter"><svg width="14" height="12" viewBox="0 0 14 12"><path d="M1 .5h12L9 5.500V11L5.500 11.500V5.500z" fill="#6fa6d8" stroke="#14233a" /></svg></button>
            <button aria-label="Find"><svg width="16" height="14" viewBox="0 0 16 14"><path d="M3 1h3l1 4h2l1-4h3l3 8v4h-5V9H5v4H0V9z" fill="#000" /><path d="M2 9l2-5M12 5l2 4M7 7h2" stroke="#ddd" /></svg></button>
          </div>
        </div>
        <ul class="tree">
          <li v-for="(n, i) in tree" :key="i" :class="['l' + n.level, { muted: n.muted, struck: n.struck, active: n.active }]">
            <span class="tw">
              <svg v-if="n.state === 'closed'" width="6" height="9" viewBox="0 0 6 9"><path d="M1 1l4 3.500L1 8z" fill="#fff" stroke="#444" /></svg>
              <svg v-else-if="n.state === 'open'" width="7" height="7" viewBox="0 0 7 7"><path d="M7 0v7H0z" fill="#222" /></svg>
            </span>
            <svg width="16" height="16" viewBox="0 0 16 16" v-html="icons[n.icon]" />
            <span class="t">{{ n.label }}</span>
          </li>
        </ul>
      </aside>

      <div class="right">
        <div class="canvas">
          <div class="shade"></div>
          <svg class="scene" width="100%" height="100%">
            <defs>
              <linearGradient id="face" x1="0" x2="1" y1="0" y2="0">
                <stop offset="0" stop-color="#dcdae4" /><stop offset=".12" stop-color="#dedfe8" /><stop offset=".3" stop-color="#d9d8e1" /><stop offset=".6" stop-color="#d5d5de" /><stop offset=".85" stop-color="#d9dae2" /><stop offset="1" stop-color="#d2d0da" />
              </linearGradient>
            </defs>
            <path d="M0 162.500H4000" stroke="#3f4041" />
            <svg x="50%" overflow="visible">
              <rect x="-231" y="162" width="462" height="215" fill="url(#face)" />
              <path d="M-230.500 162V377.500H231" fill="none" stroke="#3b3c40" />
              <path d="M0 0V4000" stroke="#404144" stroke-width="2" />
              <path d="M-231 163H231V378M-186 200H187V341H-186Z" fill="none" stroke="#0033ff" stroke-width="2" />
              <path d="M-217 161h4v4h-4zM-2 161h4v4h-4zM-2 198h4v4h-4zM184 268h4v4h-4zM228 268h4v4h-4z" fill="#0033ff" />
            </svg>
          </svg>

          <div class="mdi">
            <button aria-label="Minimize document"><svg width="12" height="12" viewBox="0 0 12 12"><path d="M0 8h12" stroke="#333a45" stroke-width="4" /><path d="M1 8h10" stroke="#fff" stroke-width="2" /></svg></button>
            <button aria-label="Restore document"><svg width="12" height="12" viewBox="0 0 12 12"><path d="M4 3V1.500h6.500V9H9" fill="none" stroke="#fff" stroke-width="1.500" /><path d="M2 4h6v6.500H2z" fill="#333a45" stroke="#fff" stroke-width="2" /></svg></button>
            <button aria-label="Close document"><svg width="12" height="12" viewBox="0 0 12 12"><path d="M2 2l8 8M10 2l-8 8" stroke="#fff" stroke-width="2.500" /></svg></button>
          </div>
          <button class="cube"><span>TOP</span></button>
          <div class="navbar">
            <button class="round" aria-label="Close navigation bar"><svg width="9" height="9" viewBox="0 0 9 9"><circle cx="4.500" cy="4.500" r="4.500" fill="#50555e" /><path d="M2.500 2.500l4 4M6.500 2.500l-4 4" stroke="#ddd" /></svg></button>
            <button aria-label="Wheel"><svg width="22" height="22" viewBox="0 0 22 22"><path d="M11 .5h9.500V11A10 10 0 1 1 11 .5z" fill="#b4b9c2" stroke="#595f69" /><circle cx="11" cy="11" r="9" fill="none" stroke="#e2e4e8" /><circle cx="11" cy="11" r="5.500" fill="#b6bbc4" stroke="#555b65" /><path d="M5 5l2 2M17 5l-2 2M5 17l2-2M17 17l-2-2" stroke="#666c76" /></svg></button>
            <i class="caret"></i>
            <i class="rule"></i>
            <button aria-label="Pan"><svg width="17" height="17" viewBox="0 0 17 17"><path d="M1 7l1-1 3 3-1-7 1.500-.5L7 7V1l1.500-.5L9 7l1.500-6 1.500.5L11 8l3-4 1.500 1L13 10c0 4-2 6-4 6-4 0-5-4-8-9z" fill="#dfe1e5" stroke="#565b64" stroke-width=".7" /></svg></button>
            <button aria-label="Zoom"><svg width="17" height="17" viewBox="0 0 17 17"><path d="M11 11l5 5" stroke="#484d56" stroke-width="3" /><circle cx="7" cy="7" r="6" fill="#757c87" stroke="#c9ccd1" stroke-width="1.500" /><path d="M4.500 4.500h5v5h-5z" fill="#cfd2d7" /></svg></button>
            <i class="caret"></i>
            <button aria-label="Orbit"><svg width="17" height="17" viewBox="0 0 17 17"><path d="M5 5C2 6 1 7 1 8.500 1 12 9 13 13 11M12 5c3 1 4 2 4 3.500 0 1-1 2-2 2M5 5c4-1 6-1 9 .5" fill="none" stroke="#555a63" /><path d="M5 12c-1-5 0-11 3.500-11S13 7 12 11c-1 5-4 7-6 4M8.500 6v5M6 8.500h5" fill="none" stroke="#555a63" /></svg></button>
            <i class="caret"></i>
            <button aria-label="Look at"><svg width="17" height="17" viewBox="0 0 17 17"><path d="M1 5.500h15v10H1z" fill="#b9bdc5" stroke="#4d525b" /><path d="M2 6.500h13v8H2z" fill="none" stroke="#e3e5e9" /><path d="M4.500 8.500h8v4h-8z" fill="#8c929c" stroke="#4d525b" /><path d="M3 4l4-3v2h5" fill="none" stroke="#555" /></svg></button>
            <button class="round" aria-label="Options"><svg width="9" height="9" viewBox="0 0 9 9"><circle cx="4.500" cy="4.500" r="4.500" fill="#50555e" /><path d="M2.500 3h4" stroke="#ddd" /><path d="M2 4.500h5L4.500 7z" fill="#ddd" /></svg></button>
          </div>
          <button class="share" aria-label="Share">
            <svg width="28" height="32" viewBox="0 0 28 32"><path d="M14 0l14 8v16l-14 8L0 24V8z" fill="#5fb0f5" /><path d="M14 0l14 8-4 3-10-6-10 6-4-3z" fill="#7fc3fa" /><path d="M28 8v16l-14 8v-5l10-6V11z" fill="#4b9ce0" /><path d="M14 5l10 6v10l-10-5z" fill="#3a86d4" /><path d="M14 5L4 11v10l10-5z" fill="#4795e0" /><path d="M4 21l10-5 10 5-10 6z" fill="#8cc8fa" /><path d="M18 12L9 17l9 4" fill="none" stroke="#fff" stroke-width="1.500" /><circle cx="18" cy="12" r="2.500" fill="#fff" /><circle cx="9" cy="17" r="2.500" fill="#fff" /><circle cx="18" cy="22" r="2.500" fill="#fff" /></svg>
          </button>
        </div>

        <div class="doctabs">
          <button v-for="l in layouts" :key="l" class="lay" :aria-label="l"><svg width="16" height="16" viewBox="0 0 16 16" v-html="icons[l]" /></button>
          <button class="dt">My Home</button>
          <button class="dt cur">Part1.ipt<svg width="9" height="9" viewBox="0 0 9 9"><path d="M1 1l7 7M8 1L1 8" stroke="#444" stroke-width="2" /></svg></button>
        </div>
      </div>
    </main>

    <footer class="status">
      <span class="ready">Ready</span>
      <div class="stools">
        <button aria-label="Snap to grid"><svg width="16" height="16" viewBox="0 0 16 16" v-html="icons.snap" /></button>
        <button aria-label="Infer constraints"><svg width="16" height="16" viewBox="0 0 16 16" v-html="icons.hint" /></button>
        <button aria-label="Dimension display"><svg width="16" height="16" viewBox="0 0 16 16" v-html="icons.dimEdit" /></button>
        <i class="caret light"></i>
        <button aria-label="Slice graphics"><svg width="16" height="16" viewBox="0 0 16 16" v-html="icons.slice" /></button>
        <button aria-label="Degrees of freedom"><svg width="16" height="16" viewBox="0 0 16 16" v-html="icons.moveLight" /></button>
        <button aria-label="Relax mode"><svg width="16" height="16" viewBox="0 0 16 16" v-html="icons.relax" /></button>
      </div>
      <span class="cell pos">0.000 mm, 0.000 mm</span>
      <span class="cell need">2 dimensions needed</span>
      <span class="cell n">1</span>
      <span class="cell n">1</span>
    </footer>
  </div>
</template>

<style>
html, body { margin: 0; overflow: hidden; }
</style>

<style scoped>
.app { height: 100vh; display: flex; flex-direction: column; font: 12px/15px "Open Sans", "Noto Sans", sans-serif; color: #333842; background: #f5f5f5; overflow: hidden; }
.app * { box-sizing: border-box; }
button { border: 0; background: none; padding: 0; margin: 0; font: inherit; color: inherit; display: flex; align-items: center; justify-content: center; white-space: nowrap; }
svg { display: block; flex: none; }
.caret { flex: none; width: 0; height: 0; border: solid transparent; border-width: 3px 3px 0; border-top-color: #444; }
.caret.light { border-top-color: #ccc; }
.caret.wide { border-width: 4px 4px 0; border-top-color: #444; }

.desktop { flex: none; height: 8px; background: #1b2b2b; display: flex; overflow: hidden; position: relative; padding-left: 393px; }
.lit { width: 48px; height: 8px; background: #4a5756; }
.date { position: absolute; right: 60px; top: -10px; color: #fff; font-size: 11px; }
.ring { position: absolute; right: 18px; top: -11px; width: 15px; height: 15px; border: 1px solid #8a9494; border-radius: 50%; }
.edge { position: absolute; right: 4px; top: 0; width: 1px; height: 8px; background: #7e8a8a; }

.titlebar { flex: none; height: 26px; display: grid; grid-template-columns: 28px 26px 10px 26px 22px 26px 22px 9px 22px 26px 10px 26px 6px 30px 22px 100px 24px 100px 24px 24px 24px 24px 16px 1fr 13px 180px 24px 24px 24px 82px 12px 32px 4px 30px 8px 16px 24px 26px 24px; align-items: center; justify-items: center; background: #4f4f4f; color: #d6d6d6; }
.titlebar > button { padding-bottom: 4px; }
.logo { flex-direction: column; color: #e98a35; justify-self: start; margin-left: 5px; padding-top: 3px; }
.logo span { font-size: 7px; line-height: 7px; }
.titlebar > .logo { padding-bottom: 0; }
.bar { width: 1px; height: 22px; background: #777; }
.combo { width: 100%; height: 22px; align-self: start; background: #969696; display: flex; align-items: center; padding-right: 3px; }
.combo select { flex: 1; min-width: 0; appearance: none; border: 0; background: none; color: #747474; font: italic 12px/16px "Open Sans", sans-serif; padding: 0 0 0 4px; }
.titlebar .fx { font: italic 18px/20px "Liberation Serif", serif; color: #161616; }
.fx sub { font-size: 12px; line-height: 10px; vertical-align: baseline; align-self: flex-end; font-weight: 700; }
.doc { justify-self: stretch; height: 100%; text-align: center; padding: 5px 10px 0 0; line-height: 14px; background: repeating-linear-gradient(135deg, #4f4f4f 0 3px, #4b4b4b 3px 4px); }
.play { border: solid transparent; border-width: 4px 0 4px 5px; border-left-color: #ccc; margin-bottom: 4px; }
.search { width: 100%; height: 19px; border: 0; background: #969696; color: #eee; font: inherit; padding: 0 5px; align-self: start; margin-top: 1px; }
.search::placeholder { color: #e6e6e6; opacity: 1; }
.titlebar > .signin { justify-self: start; padding: 0 0 3px 1px; }

.tabs { flex: none; height: 21px; display: grid; grid-template-columns: 44px 74px 53px 60px 46px 65px 42px 96px 38px 82px 42px 102px 80px 1fr; background: #4f4f4f; color: #d6d6d6; border-bottom: 1px solid #8cff82; }
.tabs .file { background: #f08228; color: #fff; }
.tabs .on { background: #96ff8c; color: #3c4a3c; }
.tabs .pill { justify-content: flex-start; padding-left: 22px; }

.ribbon { flex: none; height: 93px; display: flex; background: #f5f5f5; }
.group { flex: none; border-right: 1px solid #d2d2d2; display: flex; flex-direction: column; padding-top: 2px; }
.body { height: 72px; display: flex; }
.name { flex: 1; display: flex; align-items: center; justify-content: center; gap: 7px; }
.g-sketch { width: 79px; }
.g-create { width: 368px; }
.g-modify { width: 204px; }
.g-pattern { width: 99px; }
.g-constrain { width: 200px; }
.g-insert { width: 69px; }
.g-format { width: 106px; }
.g-exit { width: 45px; border: 0; }
.g-exit .big { width: 100%; }
.name.exit { background: #96ff8c; margin: 2px 0 1px 1px; }
.big { flex-direction: column; justify-content: flex-start; padding-top: 3px; gap: 4px; text-align: center; }
.big .caret { margin-top: -3px; }
.g-sketch .big { width: 68px; padding-left: 10px; }
.caret.side { margin-top: 54px; }
.g-create .big:nth-child(-n+2) { width: 48px; }
.g-create .big:nth-child(3) { width: 44px; }
.g-create .big:nth-child(4) { width: 70px; }
.g-create .big.project { width: 70px; padding-left: 14px; }
.g-create .stack { width: 76px; padding-left: 7px; border-right: 1px solid #d2d2d2; }
.stack { flex-direction: column; }
.small { height: 24px; gap: 5px; justify-content: flex-start; }
.small .caret { margin-left: 1px; }
.grid3 { display: grid; grid-template-columns: 65px 66px 1fr; padding-left: 7px; }
.g-pattern .stack, .g-insert .stack, .g-format .small { padding-left: 7px; }
.g-constrain .big { width: 66px; }
.cells { display: grid; grid-auto-rows: 22px; row-gap: 2px; padding-top: 1px; }
.cells button { border: 1px solid #c6c6c6; margin-right: -1px; background: #f8f8f8; }
.cells.one { grid-template-columns: 23px; margin-right: 12px; }
.cells.four { grid-template-columns: repeat(4, 24px); }
.cells.two { grid-template-columns: repeat(2, 24px); margin-left: 3px; height: 48px; }

.work { flex: 1; min-height: 0; display: flex; }
.browser { flex: none; width: 246px; background: #fff; border: solid #a0a0a0; border-width: 1px 0; padding: 0 3px; margin-bottom: 1px; }
.head { height: 63px; background: #f5f5f5; border-bottom: 1px solid #d2d2d2; }
.head .x { margin-left: auto; width: 13px; height: 13px; }
.modelrow { display: flex; height: 24px; align-items: center; padding: 0 1px 0 8px; justify-content: space-between; }
.model { font-weight: 700; color: #5a5a5a; gap: 4px; }
.q { width: 14px; height: 14px; border: 1px solid #999; border-radius: 50%; font-size: 10px; line-height: 12px; color: #888; }
.find { display: flex; gap: 9px; padding-left: 4px; height: 21px; align-items: center; }
.tree { list-style: none; margin: 0; padding: 0; background: #f0f0f0; color: #000; font: 11px/16px "DejaVu Sans Condensed", "DejaVu Sans", sans-serif; }
.tree li { display: flex; align-items: center; height: 18px; }
.tw { width: 21px; display: flex; padding-left: 7px; flex: none; }
.l0 .tw { width: 12px; }
.l2 .tw { width: 30px; }
.t { margin-left: 2px; padding-top: 1px; white-space: nowrap; }
.muted { color: #777; }
.struck { color: #777; text-decoration: line-through; }
.tree .active { background: #fff; }
.active .t { background: #0a78d7; color: #fff; font-weight: 700; line-height: 13px; padding: 0 1px; }

.right { flex: 1; min-width: 0; display: flex; flex-direction: column; }
.canvas { flex: 1; position: relative; overflow: hidden; background: linear-gradient(#7d8ca8 0%, #9ba6b9 28%, #949fb0 55%, #9aa2b0 70%, #b0b3bb 84%, #c6c7ca 100%); }
.shade { position: absolute; inset: 0; background: radial-gradient(ellipse 36% 75% at 0 0, rgba(28, 32, 42, .4), rgba(28, 32, 42, .22) 45%, transparent), radial-gradient(ellipse 36% 75% at 100% 0, rgba(28, 32, 42, .4), rgba(28, 32, 42, .22) 45%, transparent), linear-gradient(to right, rgba(46, 52, 64, .8), rgba(50, 57, 70, .58) 6%, rgba(56, 64, 78, .34) 12%, rgba(62, 70, 86, .16) 19%, rgba(70, 78, 94, .05) 26%, rgba(70, 78, 94, 0) 34%, rgba(70, 78, 94, 0) 66%, rgba(70, 78, 94, .05) 74%, rgba(62, 70, 86, .16) 81%, rgba(56, 64, 78, .34) 88%, rgba(50, 57, 70, .58) 94%, rgba(46, 52, 64, .8)); mask-image: linear-gradient(#000 0, #000 50%, rgba(0, 0, 0, .75) 64%, rgba(0, 0, 0, .35) 75%, rgba(0, 0, 0, .15) 88%, rgba(0, 0, 0, .08) 100%); }
.scene { position: absolute; inset: 0; }
.mdi { position: absolute; right: 2px; top: 6px; display: flex; gap: 8px; }
.cube { position: absolute; right: 26px; top: 50px; width: 41px; height: 41px; background: #9398a1; border: 1px solid #7e7d79; }
.cube span { width: 25px; height: 25px; background: #8a92a2; color: #636a78; font: 700 10px/25px "Liberation Sans", sans-serif; writing-mode: vertical-rl; text-align: center; }
.navbar { position: absolute; right: 1px; top: 116px; width: 34px; height: 198px; background: #7c818b; border: 2px solid #444a56; border-radius: 5px; display: flex; flex-direction: column; align-items: center; justify-content: space-between; padding: 1px 0; }
.navbar .round { align-self: flex-end; margin-right: 2px; }
.rule { width: 26px; height: 1px; background: #50555f; }
.navbar .caret { border-top-color: #50555f; }
.share { position: absolute; right: 0; top: 462px; width: 48px; height: 47px; background: #fafafa; border: 1px solid #999; }

.doctabs { flex: none; height: 24px; background: #5f5f5f; display: flex; color: #d6d6d6; }
.lay { width: 24px; }
.dt { width: 72px; border-left: 1px solid #858585; }
.cur { width: 80px; background: #f5f5f5; color: #555; gap: 6px; }

.status { flex: none; height: 24px; display: flex; background: #f5f5f5; color: #000; line-height: 25px; padding-right: 1px; }
.ready { width: 449px; padding-left: 1px; }
.stools { flex: 1; border-left: 1px solid #d2d2d2; margin: 1px 0; display: flex; align-items: center; padding-left: 2px; }
.stools button { width: 24px; }
.stools .caret { margin: 0 2px; }
.cell { border-left: 1px solid #d2d2d2; white-space: nowrap; padding-left: 4px; font-size: 11px; }
.pos { width: 118px; }
.need { width: 120px; }
.n { width: 38px; padding-left: 7px; }
</style>
